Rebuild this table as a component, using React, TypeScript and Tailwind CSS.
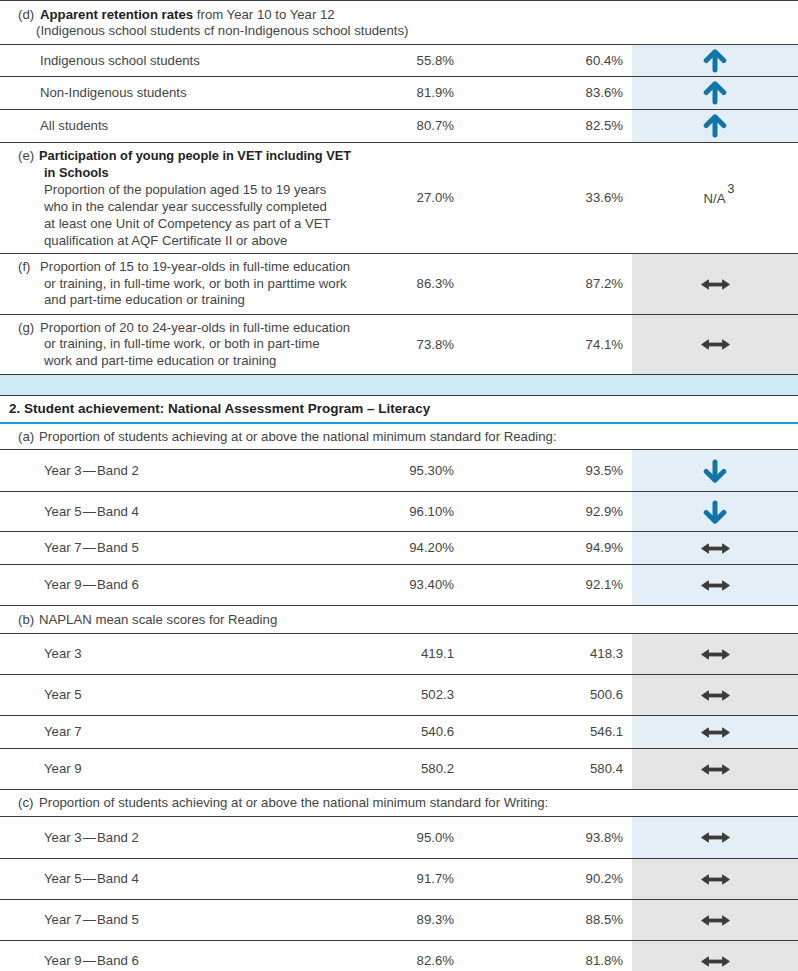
import React from "react";

type Shade = "blue" | "gray" | "none";
type Icon = "up" | "down" | "lr" | "na";

const UpArrow = ({ down = false }: { down?: boolean }) => (
  <svg
    width="24"
    height="24"
    viewBox="0 0 24 24"
    className={down ? "rotate-180" : ""}
    fill="none"
    stroke="#1275a8"
    strokeWidth="5"
    strokeLinecap="round"
    strokeLinejoin="round"
  >
    <path d="M12 4 V21" />
    <path d="M3.2 11.5 L12 2.8 L20.8 11.5" />
  </svg>
);

const LRArrow = () => (
  <svg width="29" height="11" viewBox="0 0 29 11">
    <path
      d="M0.5 5.5 L7.5 0.8 L7.5 4 L21.5 4 L21.5 0.8 L28.5 5.5 L21.5 10.2 L21.5 7 L7.5 7 L7.5 10.2 Z"
      fill="#3b3b3b"
      stroke="#3b3b3b"
      strokeWidth="0.8"
      strokeLinejoin="round"
    />
  </svg>
);

const shadeClass: Record<Shade, string> = {
  blue: "bg-[#e3eef6]",
  gray: "bg-[#e5e5e5]",
  none: "",
};

function DataRow({
  h,
  label,
  v1,
  v2,
  shade,
  icon,
}: {
  h: string;
  label: React.ReactNode;
  v1: string;
  v2: string;
  shade: Shade;
  icon: Icon;
}) {
  return (
    <div className={`grid grid-cols-[380px_74px_169px_9px_166px] border-b border-[#3a3a3a] ${h}`}>
      <div className="flex items-center">{label}</div>
      <div className="flex items-center justify-end">{v1}</div>
      <div className="flex items-center justify-end">{v2}</div>
      <div />
      <div className={`flex items-center justify-center ${shadeClass[shade]}`}>
        {icon === "up" && <UpArrow />}
        {icon === "down" && <UpArrow down />}
        {icon === "lr" && <LRArrow />}
        {icon === "na" && (
          <span className="relative -ml-[1px] mt-[2px]">
            N/A
            <span className="absolute -right-[9px] -top-[10px] text-[13px]">3</span>
          </span>
        )}
      </div>
    </div>
  );
}

const SubLabel = ({ text, pl = "pl-[40px]" }: { text: string; pl?: string }) => (
  <span className={pl}>{text}</span>
);

function Multi({ tag, lines, lh = "leading-[16.5px]" }: { tag: string; lines: React.ReactNode[]; lh?: string }) {
  return (
    <div className={`flex pl-[18px] ${lh}`}>
      <span className="w-[22px] shrink-0">{tag}</span>
      <div>
        {lines.map((l, i) => (
          <div key={i} className={i === 0 ? "" : "pl-[4px]"}>
            {l}
          </div>
        ))}
      </div>
    </div>
  );
}

function SubHeader({ h, tag, text }: { h: string; tag: string; text: string }) {
  return (
    <div className={`flex items-center border-b border-[#3a3a3a] pl-[18px] ${h}`}>
      <span className="w-[21px] shrink-0">{tag}</span>
      <span>{text}</span>
    </div>
  );
}

const YB = (y: string, b: string) => `Year ${y}\u200a\u2014\u200aBand ${b}`;

export default function App() {
  return (
    <div
      className="w-[798px] bg-white text-[13.2px] text-[#444444] border-t border-[#3a3a3a]"
      style={{ fontFamily: '"Liberation Sans", Arial, sans-serif' }}
    >
      {/* (d) header */}
      <div className="flex h-[44px] items-center border-b border-[#3a3a3a] pl-[18px] leading-[16px]">
        <span className="w-[22px] shrink-0 self-start pt-[6px]">(d)</span>
        <div>
          <div>
            <span className="font-bold text-[#222222]">Apparent retention rates</span> from Year 10 to Year 12
          </div>
          <div className="-ml-[4px]">(Indigenous school students cf non-Indigenous school students)</div>
        </div>
      </div>
      <DataRow h="h-[32px]" label={<SubLabel text="Indigenous school students" />} v1="55.8%" v2="60.4%" shade="blue" icon="up" />
      <DataRow h="h-[33px]" label={<SubLabel text="Non-Indigenous students" />} v1="81.9%" v2="83.6%" shade="blue" icon="up" />
      <DataRow h="h-[33px]" label={<SubLabel text="All students" />} v1="80.7%" v2="82.5%" shade="blue" icon="up" />

      <DataRow
        h="h-[111px]"
        label={
          <Multi
            tag="(e)"
            lh="leading-[17px]"
            lines={[
              <span className="-ml-[1px] text-[12.8px] font-bold text-[#222222]">Participation of young people in VET including VET</span>,
              <span className="text-[12.8px] font-bold text-[#222222]">in Schools</span>,
              "Proportion of the population aged 15 to 19 years",
              "who in the calendar year successfully completed",
              "at least one Unit of Competency as part of a VET",
              "qualification at AQF Certificate II or above",
            ]}
          />
        }
        v1="27.0%"
        v2="33.6%"
        shade="none"
        icon="na"
      />
      <DataRow
        h="h-[61px]"
        label={
          <Multi
            tag="(f)"
            lines={[
              "Proportion of 15 to 19-year-olds in full-time education",
              "or training, in full-time work, or both in parttime work",
              "and part-time education or training",
            ]}
          />
        }
        v1="86.3%"
        v2="87.2%"
        shade="gray"
        icon="lr"
      />
      <DataRow
        h="h-[60px]"
        label={
          <Multi
            tag="(g)"
            lines={[
              "Proportion of 20 to 24-year-olds in full-time education",
              "or training, in full-time work, or both in part-time",
              "work and part-time education or training",
            ]}
          />
        }
        v1="73.8%"
        v2="74.1%"
        shade="gray"
        icon="lr"
      />

      {/* band */}
      <div className="h-[21px] border-b border-[#3a3a3a] bg-[#cdeaf7]" />

      {/* section header */}
      <div className="flex h-[28px] items-center border-b-2 border-[#0fa3da] pl-[9px] text-[13.5px] font-bold text-[#222222]">
        2. Student achievement: National Assessment Program – Literacy
      </div>

      <SubHeader h="h-[26px]" tag="(a)" text="Proportion of students achieving at or above the national minimum standard for Reading:" />
      <DataRow h="h-[42px]" label={<SubLabel pl="pl-[44px]" text={YB("3", "2")} />} v1="95.30%" v2="93.5%" shade="blue" icon="down" />
      <DataRow h="h-[40px]" label={<SubLabel pl="pl-[44px]" text={YB("5", "4")} />} v1="96.10%" v2="92.9%" shade="blue" icon="down" />
      <DataRow h="h-[33px]" label={<SubLabel pl="pl-[44px]" text={YB("7", "5")} />} v1="94.20%" v2="94.9%" shade="blue" icon="lr" />
      <DataRow h="h-[41px]" label={<SubLabel pl="pl-[44px]" text={YB("9", "6")} />} v1="93.40%" v2="92.1%" shade="blue" icon="lr" />

      <SubHeader h="h-[28px]" tag="(b)" text="NAPLAN mean scale scores for Reading" />
      <DataRow h="h-[41px]" label={<SubLabel pl="pl-[44px]" text="Year 3" />} v1="419.1" v2="418.3" shade="gray" icon="lr" />
      <DataRow h="h-[41px]" label={<SubLabel pl="pl-[44px]" text="Year 5" />} v1="502.3" v2="500.6" shade="gray" icon="lr" />
      <DataRow h="h-[33px]" label={<SubLabel pl="pl-[44px]" text="Year 7" />} v1="540.6" v2="546.1" shade="blue" icon="lr" />
      <DataRow h="h-[41px]" label={<SubLabel pl="pl-[44px]" text="Year 9" />} v1="580.2" v2="580.4" shade="gray" icon="lr" />

      <SubHeader h="h-[27px]" tag="(c)" text="Proportion of students achieving at or above the national minimum standard for Writing:" />
      <DataRow h="h-[42px]" label={<SubLabel pl="pl-[44px]" text={YB("3", "2")} />} v1="95.0%" v2="93.8%" shade="blue" icon="lr" />
      <DataRow h="h-[41px]" label={<SubLabel pl="pl-[44px]" text={YB("5", "4")} />} v1="91.7%" v2="90.2%" shade="gray" icon="lr" />
      <DataRow h="h-[41px]" label={<SubLabel pl="pl-[44px]" text={YB("7", "5")} />} v1="89.3%" v2="88.5%" shade="gray" icon="lr" />
      <DataRow h="h-[41px]" label={<SubLabel pl="pl-[44px]" text={YB("9", "6")} />} v1="82.6%" v2="81.8%" shade="gray" icon="lr" />
    </div>
  );
}
